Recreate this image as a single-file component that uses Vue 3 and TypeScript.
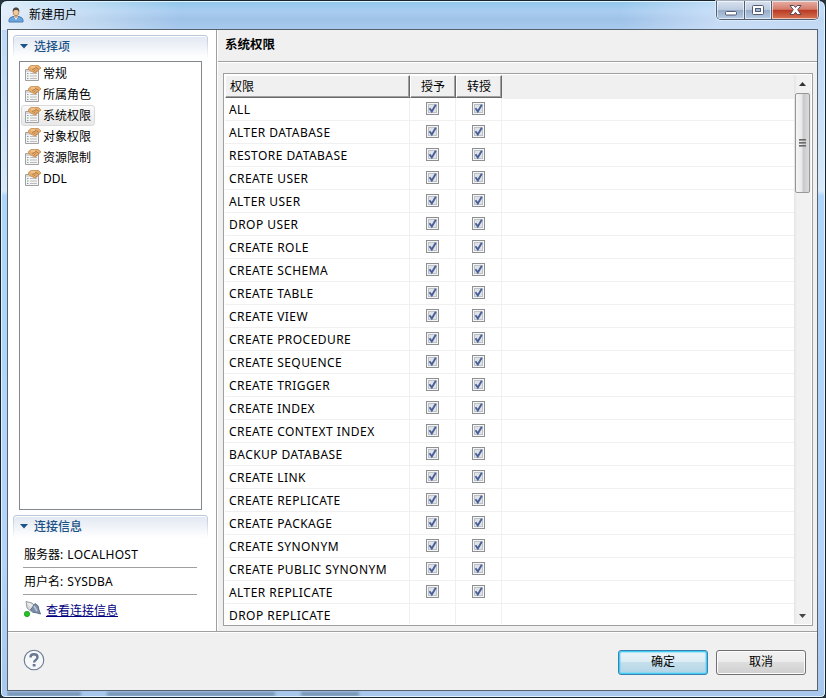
<script setup lang="ts">
interface Privilege {
  name: string
  grant: boolean
  admin: boolean
}

const pages: string[] = ['常规', '所属角色', '系统权限', '对象权限', '资源限制', 'DDL']
const selectedPage = '系统权限'

const names: string[] = [
  'ALL', 'ALTER DATABASE', 'RESTORE DATABASE', 'CREATE USER', 'ALTER USER', 'DROP USER',
  'CREATE ROLE', 'CREATE SCHEMA', 'CREATE TABLE', 'CREATE VIEW', 'CREATE PROCEDURE',
  'CREATE SEQUENCE', 'CREATE TRIGGER', 'CREATE INDEX', 'CREATE CONTEXT INDEX',
  'BACKUP DATABASE', 'CREATE LINK', 'CREATE REPLICATE', 'CREATE PACKAGE', 'CREATE SYNONYM',
  'CREATE PUBLIC SYNONYM', 'ALTER REPLICATE', 'DROP REPLICATE',
]
const privileges: Privilege[] = names.map((name) => ({
  name,
  grant: name !== 'DROP REPLICATE',
  admin: name !== 'DROP REPLICATE',
}))
</script>

<template>
  <div class="window">
    <header class="titlebar">
      <svg class="user-icon" width="16" height="16" viewBox="0 0 16 16">
        <path d="M1 15v-2.200q.3-2.300 4-3.300h6q3.700 1 4 3.300V15z" fill="#6ba5dc" stroke="#4b7cb8" />
        <path d="M6 9.500 8 13l2-3.500z" fill="#fff" />
        <path d="M6.500 8h3v2L8 11.500 6.500 10z" fill="#dba66f" />
        <ellipse cx="8" cy="4.800" rx="3" ry="3.900" fill="#f2c99b" stroke="#8e6132" stroke-width=".6" />
        <path d="M4.800 5Q4.300.5 8 .5T11.200 5Q10.500 2.600 8 3 5.500 2.600 4.800 5z" fill="#4b4643" />
      </svg>
      <span class="title">新建用户</span>
      <div class="controls">
        <span class="ctl ctl-min">
          <svg width="27" height="18" viewBox="0 0 27 18"><rect x="8.500" y="10.500" width="11" height="3.500" rx="1" fill="#fff" stroke="#535b6e" /></svg>
        </span>
        <span class="ctl ctl-max">
          <svg width="26" height="18" viewBox="0 0 26 18">
            <rect x="7.500" y="4.500" width="11" height="9" rx="1" fill="#fff" stroke="#535b6e" />
            <rect x="10.500" y="7.500" width="5" height="3" fill="#9db8d8" stroke="#535b6e" />
          </svg>
        </span>
        <span class="ctl ctl-close">
          <svg width="46" height="18" viewBox="0 0 46 18">
            <path d="M18 4.500h3.800l1.700 2 1.700-2H29l-3.300 4.200L29 13.500h-3.800l-1.700-2.200-1.700 2.200H18l3.300-4.800z" fill="#fff" stroke="#56475a" />
          </svg>
        </span>
      </div>
    </header>

    <div class="client">
      <div class="main">
        <aside class="side">
          <section class="options">
            <h2 class="section-head">
              <svg width="8" height="5" viewBox="0 0 8 5"><path d="M0 0h8L4 4.500z" fill="#1c5285" /></svg>
              <span>选择项</span>
            </h2>
            <ul class="list">
              <li v-for="page in pages" :key="page" class="item" :class="{ selected: page === selectedPage }">
                <svg width="17" height="16" viewBox="0 0 17 16">
                  <path d="M.5 4.500h13v11H.5z" fill="#f5f5f5" stroke="#a1a1a1" />
                  <path d="M1 5h12v2H1z" fill="#d7d7d7" />
                  <path d="M2 8.500h1.500M2 13.500h1.500" stroke="#789bc5" />
                  <path d="M2 11h1.500" stroke="#60b060" />
                  <path d="M5 8.500H12M5 11H12M5 13.500H12" stroke="#bcbcbc" />
                  <path d="M3.500 2.500 6 .5h7.500l2.500 2.500-2.500 2-3 3-4-1.500-3-2z" fill="#e5ae6e" stroke="#c88b4b" stroke-width=".8" />
                  <path d="m7 5 4-2.500 3 2M8.500 6.500l2-2M10.500 7.500l1.500-2" fill="none" stroke="#aa703c" stroke-width=".8" />
                  <path d="M6 2h4" stroke="#f8d7a7" />
                </svg>
                <span>{{ page }}</span>
              </li>
            </ul>
          </section>
          <section class="conn">
            <h2 class="section-head">
              <svg width="8" height="5" viewBox="0 0 8 5"><path d="M0 0h8L4 4.500z" fill="#1c5285" /></svg>
              <span>连接信息</span>
            </h2>
            <p class="info">服务器: <span class="value">LOCALHOST</span></p>
            <p class="info">用户名: <span class="value">SYSDBA</span></p>
            <div class="link-row">
              <svg width="17" height="17" viewBox="0 0 17 17">
                <path d="M2 1.500 8 3l3 3-4.500 5L3 8z" fill="#d7dadc" stroke="#999ea2" />
                <path d="M3.500 3 8 8M5 3l4 4" stroke="#f7f7f7" />
                <path d="M11 3.500q4 1.500 4 6.500l1.500 4-4-1.200Q8 13 6.500 10z" fill="#7d8fa9" stroke="#5f7189" />
                <path d="m10 6 3 5" stroke="#bdc9d8" stroke-width="1.500" />
                <circle cx="3" cy="14" r="2.700" fill="#20c51d" stroke="#138811" stroke-width=".6" />
              </svg>
              <a class="link">查看连接信息</a>
            </div>
          </section>
        </aside>

        <section class="content">
          <h1 class="heading">系统权限</h1>
          <div class="body">
            <div class="table">
              <div class="grid">
                <div class="row head">
                  <span class="th th-name">权限</span>
                  <span class="th">授予</span>
                  <span class="th">转授</span>
                </div>
                <div v-for="p in privileges" :key="p.name" class="row">
                  <span class="name">{{ p.name }}</span>
                  <span v-for="(on, i) in [p.grant, p.admin]" :key="i" class="cell">
                    <svg v-if="on" width="13" height="13" viewBox="0 0 13 13">
                      <rect x=".5" y=".5" width="12" height="12" fill="#f5f5f5" stroke="#8e8f8f" />
                      <rect x="2.500" y="2.500" width="8" height="8" fill="#dfe3e8" stroke="#bcc2ca" />
                      <path d="m3.500 6.300 2.300 3.200L9.800 2.800" fill="none" stroke="#4a5f97" stroke-width="1.900" />
                    </svg>
                  </span>
                </div>
              </div>
              <div class="scroll">
                <svg class="arrow" width="17" height="18" viewBox="0 0 17 18"><path d="M5 11 8.500 7 12 11z" fill="#333" /></svg>
                <div class="thumb"><i></i><i></i><i></i></div>
                <svg class="arrow down" width="17" height="18" viewBox="0 0 17 18"><path d="M5 8h7l-3.500 4z" fill="#444" /></svg>
              </div>
            </div>
          </div>
        </section>
      </div>

      <footer class="footer">
        <svg class="help" width="22" height="22" viewBox="0 0 22 22">
          <circle cx="11" cy="11" r="9.800" fill="#f6f7f9" stroke="#667892" stroke-width="1.100" />
          <path d="M7.500 8.500Q7.500 5.300 11 5.300t3.500 3q0 1.700-2 2.900-1.400.8-1.400 2.300" fill="none" stroke="#667892" stroke-width="2.400" />
          <rect x="9.700" y="15" width="2.800" height="2.500" fill="#667892" />
        </svg>
        <button class="btn primary">确定</button>
        <button class="btn">取消</button>
      </footer>
    </div>
    <div class="frame-bottom"><i class="smudge a"></i><i class="smudge b"></i><i class="smudge c"></i></div>
  </div>
</template>

<style>
body {
  margin: 0;
  background: #26343d;
}
</style>

<style scoped>
* {
  box-sizing: border-box;
}
.window {
  width: 826px;
  height: 698px;
  padding: 0 7px 0 6px;
  border: 1px solid #17242d;
  border-radius: 7px 7px 5px 5px;
  box-shadow: inset 0 0 0 1px #e2f4ff;
  background:
    linear-gradient(90deg, rgba(255, 255, 255, 0.7), rgba(255, 255, 255, 0.4) 70px, transparent 180px) 0 0 / 100% 29px no-repeat,
    linear-gradient(90deg, transparent 620px, rgba(225, 236, 252, 0.6) 720px, rgba(225, 236, 252, 0.5)) 0 0 / 100% 29px no-repeat,
    linear-gradient(180deg, #8ec7e9 0, #a9cdf1 10px, #9fc2e8 18px, #a8caee 29px) 0 0 / 100% 29px no-repeat,
    linear-gradient(180deg, #b9d6f6 0, #d8e9fa 190px, #afd5fa 195px, #b4d5f9 560px, #a7c8ec 100%);
  font: 12px/16px "Noto Sans", "Noto Sans CJK SC", sans-serif;
  color: #000;
}
.titlebar {
  display: flex;
  align-items: flex-start;
  height: 28px;
}
.user-icon {
  margin: 6px 0 0 1px;
}
.title {
  flex: 1;
  margin: 6px 0 0 5px;
}
.controls {
  display: flex;
  height: 19px;
  margin-right: -1px;
  border: 1px solid #505e72;
  border-top: 0;
  border-radius: 0 0 5px 5px;
  overflow: hidden;
  box-shadow: 0 0 0 1px #e7f3ffaa;
}
.ctl {
  height: 18px;
  background: linear-gradient(#d8e2f0, #bdcce0 48%, #96acc8 52%, #b7cce4);
  box-shadow: inset 0 0 0 1px #ffffff99;
}
.ctl svg {
  display: block;
}
.ctl-min,
.ctl-max {
  border-right: 1px solid #505e72;
}
.ctl-close {
  background: linear-gradient(#e6b0a5, #d57c6b 46%, #b93b25 52%, #d87454);
}
.client {
  display: flex;
  flex-direction: column;
  height: 662px;
  border: 1px solid #56636f;
  background: #f0f0f0;
}
.main {
  display: flex;
  height: 602px;
  border-bottom: 1px solid #a0a0a0;
}
.side {
  width: 209px;
  padding: 5px 8px 0 5px;
  border-right: 1px solid #a0a0a0;
  background: #fff;
}
.section-head {
  display: flex;
  align-items: center;
  gap: 6px;
  height: 24px;
  margin: 0;
  padding: 0 0 1px 6px;
  border: 1px solid transparent;
  border-radius: 4px 4px 0 0;
  background:
    linear-gradient(#e1e8f2, #fff) padding-box,
    linear-gradient(#b4c5d9, #fff) border-box;
  box-shadow: inset 0 1px #fff;
  color: #1c5285;
  font-size: 12px;
  font-weight: 500;
}
.list {
  width: 183px;
  height: 449px;
  margin: 2px 0 0 6px;
  padding: 1px;
  border: 1px solid #828790;
  list-style: none;
}
.item {
  display: flex;
  align-items: flex-start;
  gap: 1px;
  width: fit-content;
  height: 21px;
  padding: 1px 3px 0;
  border: 1px solid transparent;
  border-radius: 3px;
}
.item span {
  margin-top: 1px;
}
.item.selected {
  border-color: #dadada;
  background: linear-gradient(#fafafa, #e8e8e8);
}
.conn {
  margin-top: 5px;
}
.info {
  width: 174px;
  height: 27px;
  margin: 0 0 0 10px;
  padding: 6px 0 0 1px;
  border-bottom: 1px solid #a0a0a0;
}
.value {
  margin-left: 1px;
  letter-spacing: 0.25px;
}
.conn .section-head + .info {
  height: 29px;
  padding-top: 8px;
}
.link-row {
  display: flex;
  gap: 5px;
  margin: 5px 0 0 11px;
}
.link {
  margin-top: 3px;
  color: #000080;
  text-decoration: underline;
}
.content {
  flex: 1;
  border-left: 1px solid #fff;
}
.heading {
  height: 32px;
  margin: 0;
  padding: 6px 0 0 7px;
  border-bottom: 1px solid #a0a0a0;
  box-shadow: 0 1px #fff;
  font-size: 12.500px;
  line-height: 17px;
  font-weight: 700;
}
.body {
  padding: 11px 4px 5px 5px;
}
.table {
  display: flex;
  height: 553px;
  padding: 1px;
  border: 1px solid #a0a0a0;
  background: #fff;
}
.grid {
  flex: 1;
  overflow: hidden;
}
.row {
  display: grid;
  grid-template-columns: 185px 46px 46px 1fr;
  height: 23px;
  border-bottom: 1px solid #f0f0f0;
}
.row.head {
  border: 0;
  background: #f0f0f0;
  box-shadow: 277px 1px #f0f0f0;
}
.th {
  height: 23px;
  border: 1px solid #fff;
  border-right-color: #696969;
  border-bottom-color: #696969;
  box-shadow: inset -1px -1px #a0a0a0;
  line-height: 21px;
  text-align: center;
}
.th-name {
  padding-left: 4px;
  text-align: left;
}
.name {
  padding-left: 4px;
  border-right: 1px solid #f0f0f0;
  line-height: 23px;
  letter-spacing: 0.45px;
}
.cell {
  display: flex;
  justify-content: center;
  padding-top: 4px;
  border-right: 1px solid #f0f0f0;
}
.scroll {
  display: flex;
  flex-direction: column;
  width: 17px;
  background: linear-gradient(90deg, #e4e4e4, #f1f1f1 3px, #f1f1f1);
}
.arrow {
  display: block;
}
.thumb {
  display: flex;
  flex-direction: column;
  align-items: center;
  justify-content: center;
  gap: 1px;
  width: 15px;
  height: 100px;
  margin-left: 1px;
  border: 1px solid #979797;
  border-radius: 2px;
  background: linear-gradient(90deg, #f5f5f5, #e9e9eb 45%, #c9c9cc 55%, #dcdcde);
}
.thumb i {
  width: 7px;
  height: 2px;
  background: linear-gradient(#555, #aaa);
}
.down {
  margin-top: auto;
}
.footer {
  display: flex;
  flex: 1;
  gap: 8px;
  padding: 16px 11px 0 15px;
  border-top: 1px solid #fff;
}
.help {
  margin-right: auto;
}
.btn {
  width: 90px;
  height: 25px;
  margin-top: 1px;
  padding: 0 0 2px;
  border: 1px solid #707070;
  border-radius: 3px;
  background: linear-gradient(#f2f2f2, #ebebeb 49%, #dddddd 50%, #cfcfcf);
  box-shadow: inset 0 0 0 1px #fcfcfc;
  font: inherit;
  color: #000;
}
.primary {
  border-color: #3c7fb1;
  background: linear-gradient(#edf5f9, #dcebf3 49%, #c5dfec 50%, #b2d4e5);
  box-shadow: inset 0 0 0 1px #43cdf5, inset 0 0 1px 1.500px #6fd8f6;
}
.frame-bottom {
  display: flex;
  gap: 26px;
  height: 5px;
  padding-top: 1px;
  overflow: hidden;
}
.smudge {
  width: 74px;
  height: 4px;
  background: #56708e;
  filter: blur(1.500px);
  opacity: 0.65;
}
.smudge.b {
  width: 168px;
}
.smudge.c {
  width: 58px;
}
</style>
